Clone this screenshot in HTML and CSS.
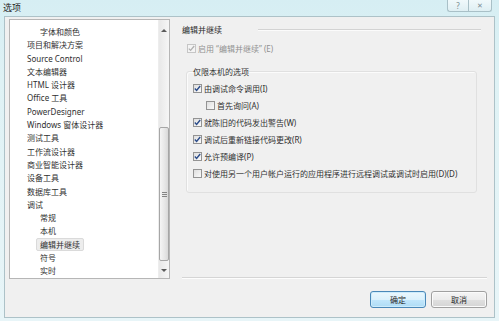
FILE: index.html
```html
<!DOCTYPE html>
<html lang="zh">
<head>
<meta charset="utf-8">
<title>选项</title>
<link rel="stylesheet" href="styles.css">
</head>
<body>
<div class="window">
  <div class="titlebar">
    <span class="title">选项</span>
    <div class="caption">
      <span class="cbtn help">?</span>
      <span class="cbtn close">✕</span>
    </div>
  </div>
  <div class="client">
    <div class="main">
      <div class="tree">
        <ul class="items">
          <li class="sub">字体和颜色</li>
          <li>项目和解决方案</li>
          <li>Source Control</li>
          <li>文本编辑器</li>
          <li>HTML 设计器</li>
          <li>Office 工具</li>
          <li>PowerDesigner</li>
          <li>Windows 窗体设计器</li>
          <li>测试工具</li>
          <li>工作流设计器</li>
          <li>商业智能设计器</li>
          <li>设备工具</li>
          <li>数据库工具</li>
          <li>调试</li>
          <li class="sub">常规</li>
          <li class="sub">本机</li>
          <li class="sub"><span class="sel">编辑并继续</span></li>
          <li class="sub">符号</li>
          <li class="sub">实时</li>
        </ul>
        <div class="scrollbar">
          <div class="arrow up"><span class="tri-up"></span></div>
          <div class="track"><div class="thumb"><span class="grip"></span></div></div>
          <div class="arrow down"><span class="tri-down"></span></div>
        </div>
      </div>
      <div class="panel">
        <div class="head"><span>编辑并继续</span><div class="rule"></div></div>
        <div class="chk disabled top">
          <span class="box"><svg viewBox="0 0 9 9" width="9" height="9"><path d="M1.8 4.6 L3.6 6.4 L7.2 2" fill="none" stroke="#b0b0b0" stroke-width="1.3"/></svg></span>
          <span>启用 “编辑并继续” (E)</span>
        </div>
        <fieldset class="group">
          <legend>仅限本机的选项</legend>
          <div class="chk">
            <span class="box"><svg viewBox="0 0 9 9" width="9" height="9"><path d="M1.8 4.6 L3.6 6.4 L7.2 2" fill="none" stroke="#2b4c8a" stroke-width="1.4"/></svg></span>
            <span>由调试命令调用(I)</span>
          </div>
          <div class="chk indent">
            <span class="box"></span>
            <span>首先询问(A)</span>
          </div>
          <div class="chk">
            <span class="box"><svg viewBox="0 0 9 9" width="9" height="9"><path d="M1.8 4.6 L3.6 6.4 L7.2 2" fill="none" stroke="#2b4c8a" stroke-width="1.4"/></svg></span>
            <span>就陈旧的代码发出警告(W)</span>
          </div>
          <div class="chk">
            <span class="box"><svg viewBox="0 0 9 9" width="9" height="9"><path d="M1.8 4.6 L3.6 6.4 L7.2 2" fill="none" stroke="#2b4c8a" stroke-width="1.4"/></svg></span>
            <span>调试后重新链接代码更改(R)</span>
          </div>
          <div class="chk">
            <span class="box"><svg viewBox="0 0 9 9" width="9" height="9"><path d="M1.8 4.6 L3.6 6.4 L7.2 2" fill="none" stroke="#2b4c8a" stroke-width="1.4"/></svg></span>
            <span>允许预编译(P)</span>
          </div>
          <div class="chk">
            <span class="box"></span>
            <span>对使用另一个用户帐户运行的应用程序进行远程调试或调试时启用(D)(D)</span>
          </div>
        </fieldset>
        <div class="spacer"></div>
        <div class="sep"></div>
      </div>
    </div>
    <div class="footer">
      <button class="btn default">确定</button>
      <button class="btn">取消</button>
    </div>
  </div>
</div>
</body>
</html>
```
FILE: styles.css
```css
* { box-sizing: border-box; }
html, body { margin: 0; padding: 0; }
body {
  width: 499px;
  height: 321px;
  overflow: hidden;
  font-family: "Noto Sans", "Noto Sans CJK SC", sans-serif;
  font-size: 8px;
  color: #303030;
  background: #eef7f9;
}
.window {
  width: 499px;
  height: 321px;
  display: flex;
  flex-direction: column;
  padding: 0 4px 3px 4px;
  background: linear-gradient(to bottom, #d6eef3 0, #dff2f5 80px, #e8f5f8 100%);
}
.titlebar {
  height: 16px;
  display: flex;
  justify-content: space-between;
  align-items: flex-start;
  flex: none;
}
.title {
  font-size: 9px;
  line-height: 16px;
  margin-left: -1px;
  color: #252525;
}
.caption { display: flex; margin-right: 3px; }
.cbtn {
  height: 12px;
  border: 1px solid #a9c0c7;
  border-top: none;
  background: linear-gradient(#f0f9fb, #dfeff3);
  display: flex;
  align-items: center;
  justify-content: center;
  color: #7a8b92;
  font-size: 8px;
  line-height: 1;
}
.cbtn.help { width: 21px; border-radius: 0 0 0 3px; border-right: none; }
.cbtn.close { width: 24px; border-radius: 0 0 3px 0; font-size: 7px; }
.client {
  flex: 1;
  background: #f0f0f0;
  border: 1px solid #adc2c8;
  display: flex;
  flex-direction: column;
}
.main {
  display: flex;
  padding: 2px 7px 0 4px;
}
.tree {
  width: 161px;
  height: 260px;
  border: 1px solid #b6b6b6;
  background: #fff;
  display: flex;
  flex: none;
}
.items {
  list-style: none;
  margin: 0;
  padding: 5px 0 0 0;
  flex: 1;
  overflow: hidden;
}
.items li {
  height: 13.3px;
  line-height: 13.3px;
  padding-left: 17px;
  white-space: nowrap;
}
.items li.sub { padding-left: 30px; }
.sel {
  display: inline-block;
  background: #ededed;
  border: 1px solid #dadada;
  border-radius: 2px;
  padding: 0 3px;
  margin-left: -4px;
  line-height: 11px;
}
.scrollbar {
  width: 11px;
  display: flex;
  flex-direction: column;
  background: linear-gradient(to right, #e8e8e8, #f6f6f6);
  border-left: 1px solid #ededed;
  flex: none;
}
.arrow {
  height: 17px;
  display: flex;
  align-items: center;
  justify-content: center;
  flex: none;
}
.tri-up {
  width: 0; height: 0;
  border-left: 3px solid transparent;
  border-right: 3px solid transparent;
  border-bottom: 3px solid #5a5a5a;
  margin-top: 3px;
}
.tri-down {
  width: 0; height: 0;
  border-left: 3px solid transparent;
  border-right: 3px solid transparent;
  border-top: 3px solid #5a5a5a;
  margin-top: 2px;
}
.track { flex: 1; display: flex; flex-direction: column; }
.thumb {
  margin-top: 90px;
  flex: 1;
  border: 1px solid #a6a6a6;
  border-radius: 2px;
  background: linear-gradient(to right, #f5f5f5, #e6e6e6 60%, #d9d9d9);
  display: flex;
  align-items: center;
  justify-content: center;
}
.grip {
  width: 5px;
  height: 5px;
  background: repeating-linear-gradient(#858585 0 1px, transparent 1px 2px);
}
.panel {
  flex: 1;
  margin-left: 12px;
  display: flex;
  flex-direction: column;
}
.head {
  display: flex;
  align-items: center;
  height: 13px;
  line-height: 13px;
  margin-top: 4px;
  color: #2a2a2a;
}
.head .rule {
  flex: 1;
  margin-left: 36px;
  margin-right: 6px;
  height: 2px;
  border-top: 1px solid #d3d3d3;
  border-bottom: 1px solid #fbfbfb;
}
.chk {
  display: flex;
  align-items: center;
  height: 13px;
  line-height: 13px;
  white-space: nowrap;
}
.chk.top { margin: 6px 0 0 5px; }
.chk.disabled { color: #909090; }
.box {
  width: 9px;
  height: 9px;
  border: 1px solid #939393;
  background: linear-gradient(135deg, #dedede, #fafafa);
  margin-right: 2px;
  flex: none;
  display: flex;
}
.box svg { margin: -1px 0 0 -1px; flex: none; }
.chk.disabled .box { border-color: #c6c6c6; background: #f4f4f4; }
.group {
  margin: 10px 10px 0 4px;
  padding: 2px 6px 10px 6px;
  border: 1px solid #e0e0e0;
  border-radius: 3px;
  min-width: 0;
  box-shadow: inset 1px 1px 0 #fbfbfb;
}
.group legend {
  padding: 0;
  line-height: 13px;
}
.group .chk { height: 17px; }
.group .chk.indent { padding-left: 13px; }
.spacer { flex: 1; }
.sep {
  height: 2px;
  border-top: 1px solid #d5d5d5;
  border-bottom: 1px solid #fdfdfd;
  flex: none;
}
.footer {
  display: flex;
  justify-content: flex-end;
  gap: 5px;
  padding: 12px 7px 0 0;
}
.btn {
  width: 56px;
  height: 17px;
  font: inherit;
  color: #2a2a2a;
  padding: 0;
  line-height: 15px;
  border: 1px solid #a0a0a0;
  border-radius: 3px;
  background: linear-gradient(#f5f5f5 0, #ececec 50%, #e0e0e0 51%, #d5d5d5 100%);
  box-shadow: inset 0 0 0 1px #fbfbfb;
}
.btn.default {
  border-color: #4a88b8;
  background: linear-gradient(#ebf7fd 0, #dbf1fc 50%, #c2e7fc 51%, #aedcf5 100%);
  box-shadow: inset 0 0 0 1px #cdecfc;
}
```
